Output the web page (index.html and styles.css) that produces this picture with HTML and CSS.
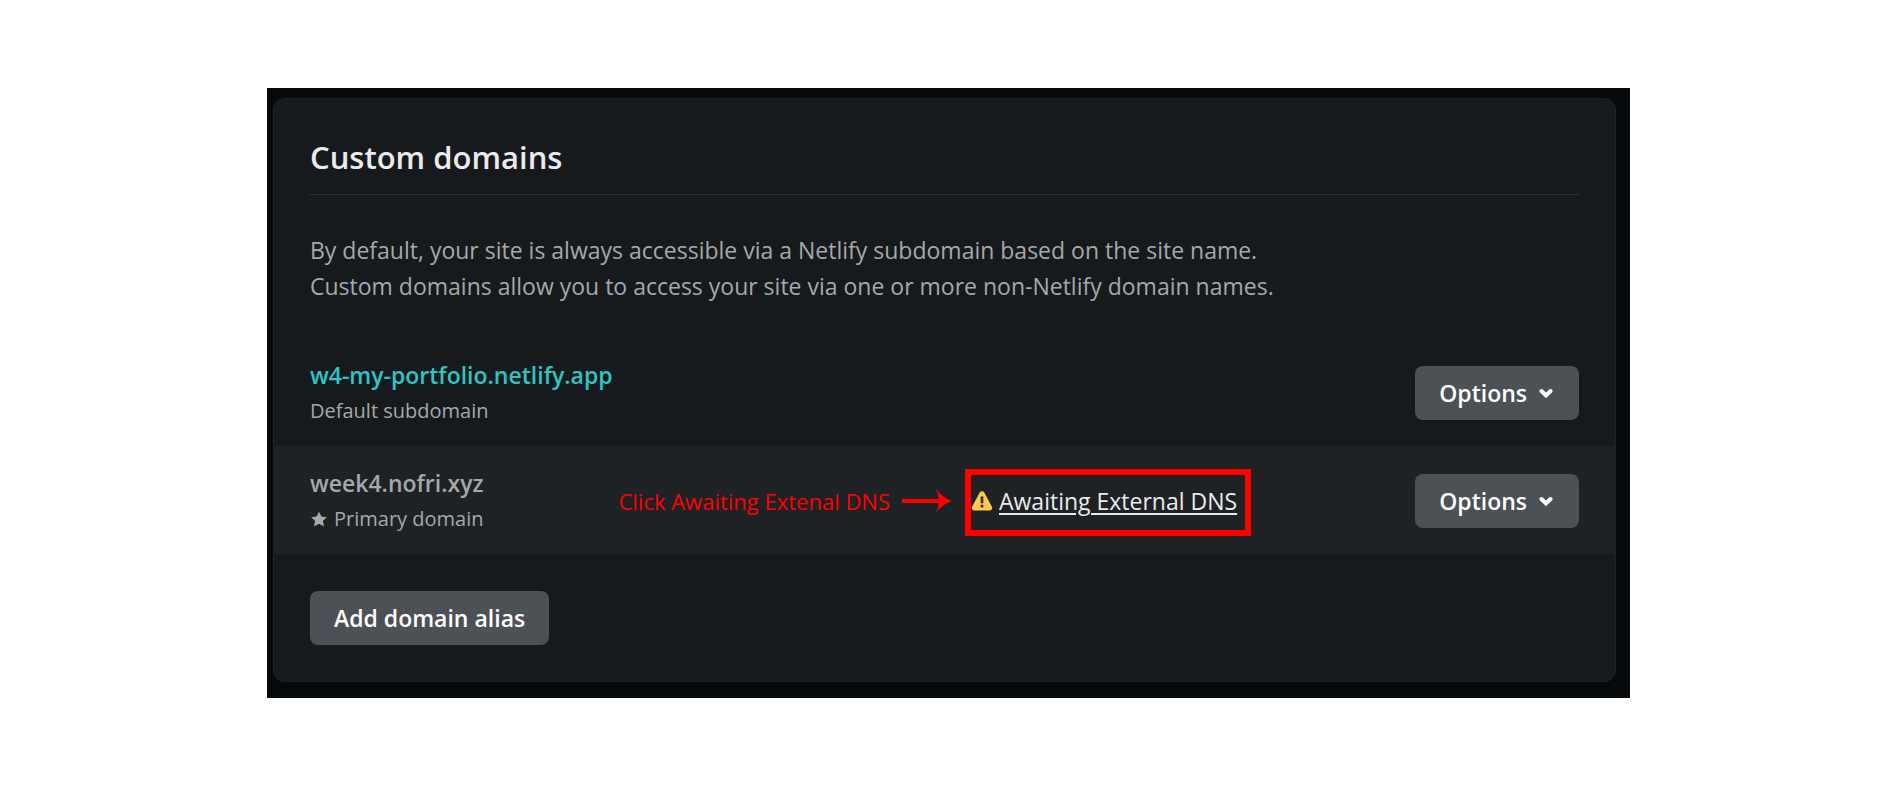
FILE: index.html
```html
<!DOCTYPE html>
<html lang="en">
<head>
<meta charset="utf-8">
<title>Custom domains</title>
<link rel="stylesheet" href="styles.css">
</head>
<body>
<main class="frame">
  <section class="card">
    <h2 class="card-title">Custom domains</h2>
    <p class="intro">By default, your site is always accessible via a Netlify subdomain based on the site name.<br>Custom domains allow you to access your site via one or more non-Netlify domain names.</p>
    <ul class="domains">
      <li class="domain">
        <div class="domain-info">
          <a class="domain-name domain-link" href="#">w4-my-portfolio.netlify.app</a>
          <span class="domain-kind">Default subdomain</span>
        </div>
        <button class="button" type="button">Options
          <svg class="chevron" viewBox="0 0 14 12" aria-hidden="true"><path d="M2.500 4 7 8.500 11.500 4"/></svg>
        </button>
      </li>
      <li class="domain domain-primary">
        <div class="domain-info">
          <strong class="domain-name">week4.nofri.xyz</strong>
          <span class="domain-kind"><svg class="star" viewBox="0 0 16 16" aria-hidden="true"><path d="M8 1.500l2.200 4.200 4.700.7-3.400 3.400.9 4.800L8 12.300l-4.400 2.300.9-4.800L1.100 6.400l4.700-.7z"/></svg>Primary domain</span>
        </div>
        <div class="status">
          <svg class="warning" viewBox="0 0 22 20" aria-hidden="true"><path class="warning-shape" d="M8.700 1.600a2.600 2.600 0 0 1 4.600 0l7.600 14.200a2.500 2.500 0 0 1-2.200 3.700H3.300a2.500 2.500 0 0 1-2.200-3.700z"/><path class="warning-mark" d="M9.700 5.400h2.600v6.800H9.700zM9.700 13.800h2.600v2.600H9.700z"/></svg>
          <a class="status-link" href="#">Awaiting External DNS</a>
          <span class="highlight"></span>
          <span class="callout">Click Awaiting Extenal DNS
            <svg class="arrow" viewBox="0 0 50 24" aria-hidden="true"><path d="M0 10h36.500q0-5-2.500-10 6.500 8.500 15.500 12-9 3.500-15.500 11.500 2.500-4.500 2.500-9.500H0z"/></svg>
          </span>
        </div>
        <button class="button" type="button">Options
          <svg class="chevron" viewBox="0 0 14 12" aria-hidden="true"><path d="M2.500 4 7 8.500 11.500 4"/></svg>
        </button>
      </li>
    </ul>
    <button class="button" type="button">Add domain alias</button>
  </section>
</main>
</body>
</html>
```
FILE: styles.css
```css
* { box-sizing: border-box; }
body {
  margin: 0;
  padding: 88px 24px;
  background: #fff;
  color: #a3a9ac;
  font: 23px/36px "Open Sans", "Noto Sans", sans-serif;
}
.frame {
  max-width: 1363px;
  margin: 0 auto;
  padding: 10px 14px 16px 6px;
  background: #060a0c;
}
.card {
  padding: 36px;
  border: 1px solid #1e2326;
  border-radius: 12px;
  background: #161a1d;
}
.card-title {
  margin: 0;
  padding-bottom: 15px;
  border-bottom: 1px solid #2c3033;
  color: #e9ebed;
  font-size: 31px;
  font-weight: 600;
  line-height: 44px;
}
.intro { margin: 37px 0 34px; }
.domains {
  margin: 0 -36px 37px;
  padding: 0;
  list-style: none;
}
.domain {
  display: flex;
  align-items: center;
  justify-content: space-between;
  padding: 19px 36px 17px;
}
.domain-primary { background: #1e2225; }
.domain-info {
  display: flex;
  flex-direction: column;
  flex: 0 1 661px;
}
.domain-name { font-weight: 600; }
.domain-link { color: #32c3c3; text-decoration: none; }
.domain-kind {
  display: flex;
  align-items: center;
  gap: 6px;
  font-size: 20px;
}
.star { width: 18px; height: 18px; fill: currentColor; }
.status {
  position: relative;
  display: flex;
  align-items: center;
  gap: 6px;
  margin-right: auto;
}
.warning { width: 22px; height: 20px; }
.warning-shape { fill: #fdc84b; }
.warning-mark { fill: #2b2a22; }
.status-link {
  color: #e9ebed;
  text-decoration-thickness: 2px;
  text-underline-offset: 3px;
}
.highlight {
  position: absolute;
  inset: -14px -14px -17px -6px;
  border: 6px solid #f00;
  pointer-events: none;
}
.callout {
  position: absolute;
  right: 100%;
  bottom: 0;
  display: flex;
  align-items: center;
  gap: 12px;
  margin-right: 19px;
  color: #f00;
  font-size: 22px;
  white-space: nowrap;
}
.arrow { width: 50px; height: 24px; fill: currentColor; }
.button {
  display: inline-flex;
  align-items: center;
  gap: 12px;
  padding: 9px 24px;
  border: 0;
  border-radius: 8px;
  background: #4c5156;
  color: #fff;
  font: inherit;
  font-weight: 600;
}
.chevron {
  width: 14px;
  height: 12px;
  margin-right: 2px;
  fill: none;
  stroke: currentColor;
  stroke-width: 4;
  stroke-linecap: round;
}
```
